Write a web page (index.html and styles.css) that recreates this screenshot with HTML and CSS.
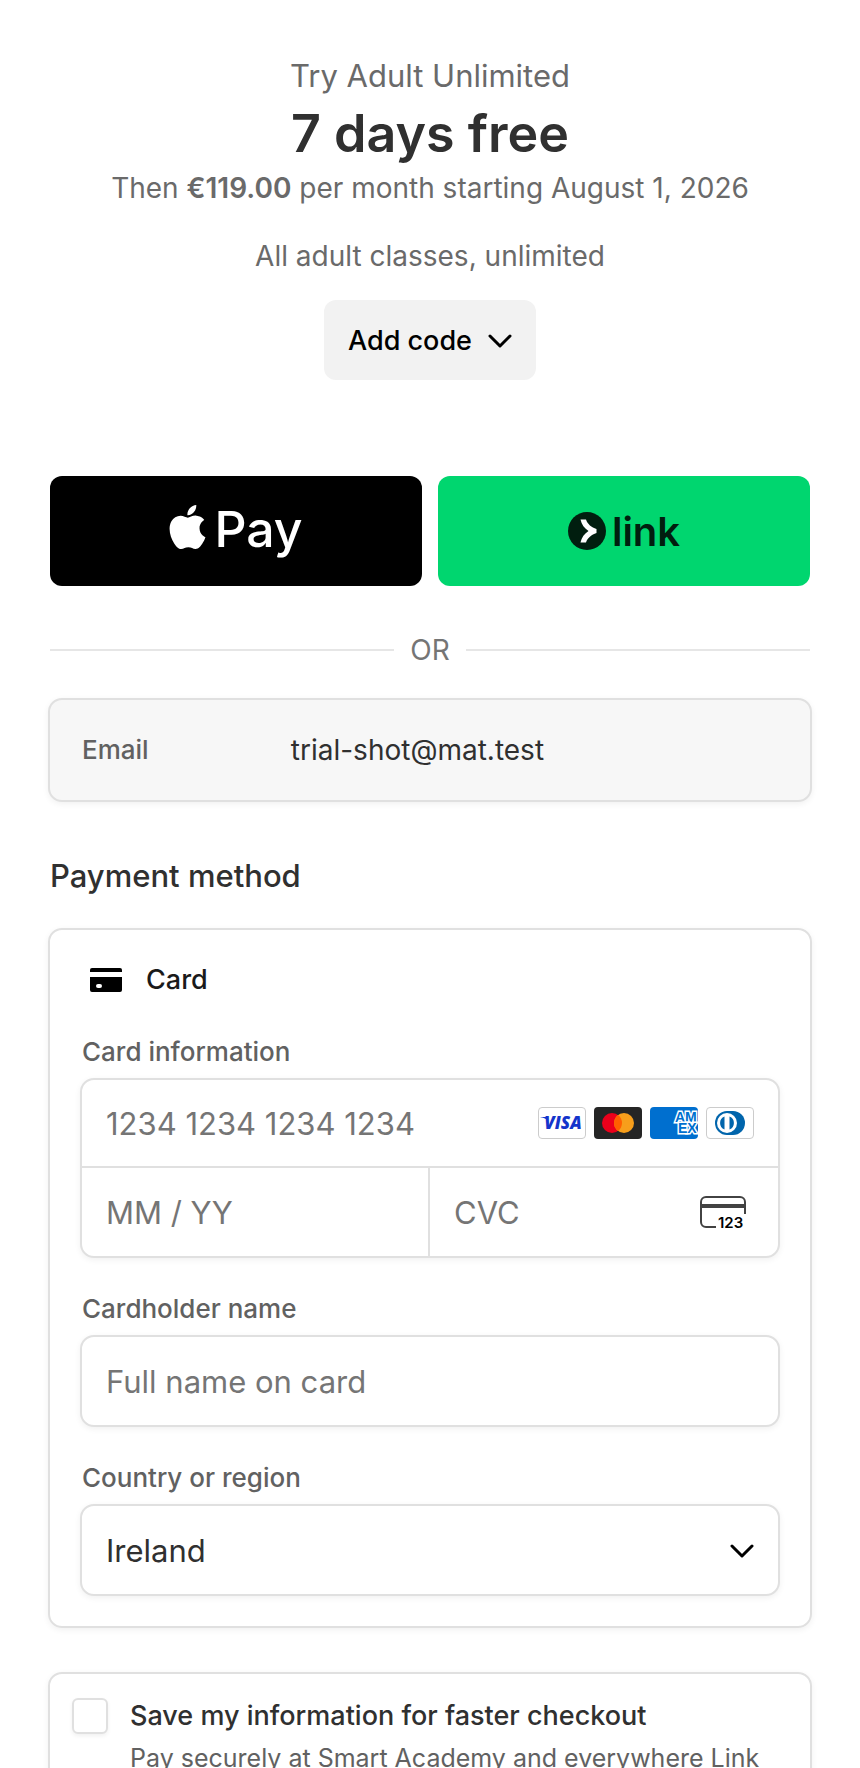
FILE: index.html
```html
<!DOCTYPE html>
<html lang="en">
<head>
    <meta charset="UTF-8">
    <meta name="viewport" content="width=device-width, initial-scale=1.0">
    <title>Checkout</title>
    <link rel="stylesheet" href="styles.css">
</head>
<body>
  <main class="checkout">
    <!-- Plan summary -->
    <header class="summary">
      <p class="plan">Try Adult Unlimited</p>
      <h1>7 days free</h1>
      <p class="billing">Then <strong>€119.00</strong> per month starting August 1, 2026</p>
      <p class="description">All adult classes, unlimited</p>
      <button type="button" class="code-btn">
        Add code
        <svg class="chevron" viewBox="0 0 24 16" aria-hidden="true"><path d="M2 4l10 10 10-10"/></svg>
      </button>
    </header>

    <!-- Express checkout -->
    <div class="express">
      <button type="button" class="pay-btn apple-pay" aria-label="Apple Pay">
        <svg class="apple-icon" viewBox="2 0 20 24" aria-hidden="true">
          <path d="M12.152 6.896c-.948 0-2.415-1.078-3.96-1.04-2.04.027-3.91 1.183-4.961 3.014-2.117 3.675-.546 9.103 1.519 12.09 1.013 1.454 2.208 3.09 3.792 3.039 1.52-.065 2.09-.987 3.935-.987 1.831 0 2.35.987 3.96.948 1.637-.026 2.676-1.48 3.676-2.948 1.156-1.688 1.636-3.325 1.662-3.415-.039-.013-3.182-1.221-3.22-4.857-.026-3.04 2.48-4.494 2.597-4.559-1.429-2.09-3.623-2.324-4.39-2.376-2-.156-3.675 1.09-4.61 1.09zM15.53 3.83c.843-1.012 1.4-2.427 1.245-3.83-1.207.052-2.662.805-3.532 1.818-.78.896-1.454 2.338-1.273 3.714 1.338.104 2.715-.688 3.559-1.701"/>
        </svg>
        <span>Pay</span>
      </button>
      <button type="button" class="pay-btn link-pay">
        <svg class="link-icon" viewBox="0 0 38 38" aria-hidden="true">
          <circle cx="19" cy="19" r="19" fill="#011e0f"/>
          <path d="M12.500 7.500h5.500c1.500 4.500 5.500 8 10.500 9.500v4c-5 1.500-9 5-10.500 9.500h-5.500c1-5 4-9 8-11.500c-4-2.500-7-6.500-8-11.500z" fill="#fff"/>
        </svg>
        <span>link</span>
      </button>
    </div>

    <div class="divider"><span>OR</span></div>

    <div class="email-box">
      <span class="email-label">Email</span>
      <span class="email-value">trial-shot@mat.test</span>
    </div>

    <h2>Payment method</h2>

    <!-- Card form -->
    <section class="card-box">
      <div class="card-title">
        <svg class="card-icon" viewBox="0 0 32 24" aria-hidden="true">
          <path d="M2 0h28a2 2 0 0 1 2 2v2H0V2a2 2 0 0 1 2-2z"/>
          <path fill-rule="evenodd" d="M0 9h32v13a2 2 0 0 1-2 2H2a2 2 0 0 1-2-2zM8 16a2 2 0 0 0 0 4h2a2 2 0 0 0 0-4z"/>
        </svg>
        <span>Card</span>
      </div>

      <div class="field">
        <label for="cardNumber">Card information</label>
        <div class="card-group">
          <div class="card-row">
            <input type="text" id="cardNumber" placeholder="1234 1234 1234 1234">
            <div class="brands">
              <svg viewBox="0 0 48 32" aria-hidden="true">
                <rect x=".5" y=".5" width="47" height="31" rx="3.500" fill="#fff" stroke="#ccc"/>
                <path d="M2.500 10H9v2.500C7 11.300 4.500 10.600 2.500 10.300z" fill="#1434cb"/>
                <text x="25" y="22" text-anchor="middle" class="visa-text">VISA</text>
              </svg>
              <svg viewBox="0 0 48 32" aria-hidden="true">
                <rect width="48" height="32" rx="4" fill="#252525"/>
                <circle cx="18" cy="16" r="10" fill="#eb001b"/>
                <circle cx="30" cy="16" r="10" fill="#f79e1b"/>
                <path d="M24 8a10 10 0 0 1 0 16a10 10 0 0 1 0-16z" fill="#ff5f00"/>
              </svg>
              <svg viewBox="0 0 48 32" aria-hidden="true">
                <rect width="48" height="32" rx="4" fill="#006fcf"/>
                <text class="amex-text"><tspan x="25" y="15">AM</tspan><tspan x="28" y="26">EX</tspan></text>
              </svg>
              <svg viewBox="0 0 48 32" aria-hidden="true">
                <rect x=".5" y=".5" width="47" height="31" rx="3.500" fill="#fff" stroke="#ccc"/>
                <path d="M21 4h6a12 12 0 0 1 0 24h-6a12 12 0 0 1 0-24z" fill="#0165ac"/>
                <circle cx="21" cy="16" r="10" fill="#fff"/>
                <path d="M18.500 9.500v13a7 7 0 0 1 0-13zM23.500 9.500v13a7 7 0 0 0 0-13z" fill="#0165ac"/>
              </svg>
            </div>
          </div>
          <div class="card-row split">
            <div class="expiry">
              <input type="text" placeholder="MM / YY" aria-label="Expiration">
            </div>
            <div class="cvc">
              <input type="text" placeholder="CVC" aria-label="CVC">
              <svg class="cvc-icon" viewBox="0 0 48 33" aria-hidden="true">
                <path d="M16 31H6a5 5 0 0 1-5-5V6a5 5 0 0 1 5-5h34a5 5 0 0 1 5 5v12" fill="none" stroke="#424242" stroke-width="2"/>
                <path d="M1 8h44v4H1z" fill="#424242"/>
                <text x="18" y="32" class="cvc-text">123</text>
              </svg>
            </div>
          </div>
        </div>
      </div>

      <div class="field">
        <label for="cardName">Cardholder name</label>
        <input type="text" id="cardName" class="control" placeholder="Full name on card">
      </div>

      <div class="field">
        <label for="country">Country or region</label>
        <div class="select-wrap">
          <select id="country" class="control">
            <option>Ireland</option>
          </select>
          <svg class="chevron" viewBox="0 0 24 16" aria-hidden="true"><path d="M2 4l10 10 10-10"/></svg>
        </div>
      </div>
    </section>

    <section class="save-box">
      <input type="checkbox" id="saveInfo">
      <div>
        <label for="saveInfo">Save my information for faster checkout</label>
        <p>Pay securely at Smart Academy and everywhere Link</p>
      </div>
    </section>
  </main>
</body>
</html>
```
FILE: styles.css
```css
* {
  box-sizing: border-box;
}

body {
  font-family: Inter, 'Liberation Sans', sans-serif;
  font-size: 28px;
  line-height: 32px;
  background-color: #fff;
  color: #303030;
  margin: 0;
  height: 100vh;
  overflow: hidden;
}

h1, h2, p {
  margin: 0;
}

input, select, button {
  font-family: inherit;
}

.checkout {
  padding: 56px 48px 0;
}

/* Summary */
.summary {
  display: flex;
  flex-direction: column;
  align-items: center;
  text-align: center;
  color: #6a6a6a;
}

.plan {
  font-size: 31px;
  line-height: 40px;
}

h1 {
  font-size: 52px;
  font-weight: 600;
  line-height: 76px;
  color: #303030;
}

.billing strong {
  font-weight: 600;
}

.description {
  margin-top: 36px;
}

.code-btn {
  display: flex;
  align-items: center;
  gap: 16px;
  height: 80px;
  margin-top: 28px;
  padding: 0 24px;
  border: none;
  border-radius: 12px;
  background-color: #f2f2f2;
  color: #000;
  font-size: 27px;
  font-weight: 500;
  cursor: pointer;
}

.chevron {
  width: 24px;
  height: 16px;
  fill: none;
  stroke: #000;
  stroke-width: 3;
  stroke-linecap: round;
  stroke-linejoin: round;
}

/* Express buttons */
.express {
  display: flex;
  gap: 16px;
  margin-top: 96px;
  padding: 0 2px;
}

.pay-btn {
  flex: 1;
  display: flex;
  align-items: center;
  justify-content: center;
  height: 110px;
  border: none;
  border-radius: 12px;
  cursor: pointer;
}

.apple-pay {
  gap: 8px;
  padding-bottom: 6px;
  background-color: #000;
  color: #fff;
  font-size: 50px;
  font-weight: 500;
}

.apple-icon {
  width: 37px;
  height: 44px;
  margin-bottom: 4px;
  fill: #fff;
}

.link-pay {
  gap: 6px;
  background-color: #00d66f;
  color: #011e0f;
  font-size: 40px;
  font-weight: 600;
}

.link-icon {
  width: 38px;
  height: 38px;
}

.divider {
  display: flex;
  align-items: center;
  gap: 16px;
  margin-top: 48px;
  padding: 0 2px;
  color: #757575;
}

.divider::before, .divider::after {
  content: '';
  flex: 1;
  height: 2px;
  background-color: #e6e6e6;
}

/* Boxes */
.email-box, .card-box, .save-box {
  border: 2px solid #e0e0e0;
  border-radius: 14px;
  box-shadow: 0 2px 6px rgba(0, 0, 0, 0.06);
}

.email-box {
  display: flex;
  align-items: center;
  height: 104px;
  margin-top: 32px;
  padding: 0 32px;
  background-color: #f7f7f7;
}

.email-label {
  flex: 0 0 30%;
  font-size: 26px;
  font-weight: 500;
  color: #616161;
}

h2 {
  margin: 54px 0 32px;
  padding-left: 2px;
  font-size: 31px;
  font-weight: 500;
  line-height: 40px;
}

.card-box {
  padding: 34px 30px 30px;
}

.card-title {
  display: flex;
  align-items: center;
  gap: 24px;
  margin-bottom: 40px;
  padding-left: 10px;
  font-size: 27px;
  font-weight: 500;
  color: #1a1a1a;
}

.card-icon {
  width: 32px;
  height: 24px;
  fill: #000;
}

.field + .field {
  margin-top: 35px;
}

.field label {
  display: block;
  margin-bottom: 10px;
  padding-left: 2px;
  font-size: 26px;
  font-weight: 500;
  color: #616161;
}

.card-group, .control {
  width: 100%;
  border: 2px solid #e0e0e0;
  border-radius: 14px;
  background-color: #fff;
  box-shadow: 0 2px 6px rgba(0, 0, 0, 0.06);
}

.card-row {
  display: flex;
  align-items: center;
  height: 88px;
}

.card-row:first-child {
  border-bottom: 2px solid #e0e0e0;
}

.card-row.split {
  display: grid;
  grid-template-columns: minmax(0, 1fr) minmax(0, 1fr);
}

.card-row input {
  flex: 1;
  min-width: 0;
  height: 84px;
  padding: 0 24px;
  border: none;
  background: none;
  font-size: 31px;
}

input::placeholder {
  color: #757575;
  opacity: 1;
}

.brands {
  display: flex;
  gap: 8px;
  padding-right: 24px;
}

.brands svg {
  width: 48px;
  height: 32px;
}

.visa-text {
  font: italic 800 17px 'Open Sans', sans-serif;
  fill: #1434cb;
}

.amex-text {
  font: 700 14px 'Liberation Sans', sans-serif;
  fill: #006fcf;
  stroke: #fff;
  stroke-width: 3;
  paint-order: stroke;
}

.expiry, .cvc {
  display: flex;
  align-items: center;
  height: 88px;
}

.expiry {
  border-right: 2px solid #e0e0e0;
}

.cvc {
  padding-right: 30px;
}

.cvc-icon {
  flex: none;
  width: 48px;
  height: 33px;
}

.cvc-text {
  font: 600 15px Inter, sans-serif;
  fill: #000;
}

.control {
  display: block;
  height: 92px;
  padding: 0 24px;
  font-size: 31px;
  color: #303030;
}

.select-wrap {
  display: grid;
  align-items: center;
}

.select-wrap > * {
  grid-area: 1 / 1;
}

.select-wrap select {
  appearance: none;
}

.select-wrap .chevron {
  justify-self: end;
  margin-right: 26px;
  pointer-events: none;
}

/* Save information */
.save-box {
  display: flex;
  gap: 22px;
  margin-top: 44px;
  padding: 24px 22px;
}

.save-box input {
  appearance: none;
  flex: none;
  width: 36px;
  height: 36px;
  margin: 0;
  border: 2px solid #e0e0e0;
  border-radius: 6px;
  background-color: #fff;
  box-shadow: 0 2px 4px rgba(0, 0, 0, 0.06);
}

.save-box label {
  display: block;
  margin: 2px 0 10px;
  font-size: 27px;
  font-weight: 500;
}

.save-box p {
  font-size: 25px;
  color: #616161;
}
```
